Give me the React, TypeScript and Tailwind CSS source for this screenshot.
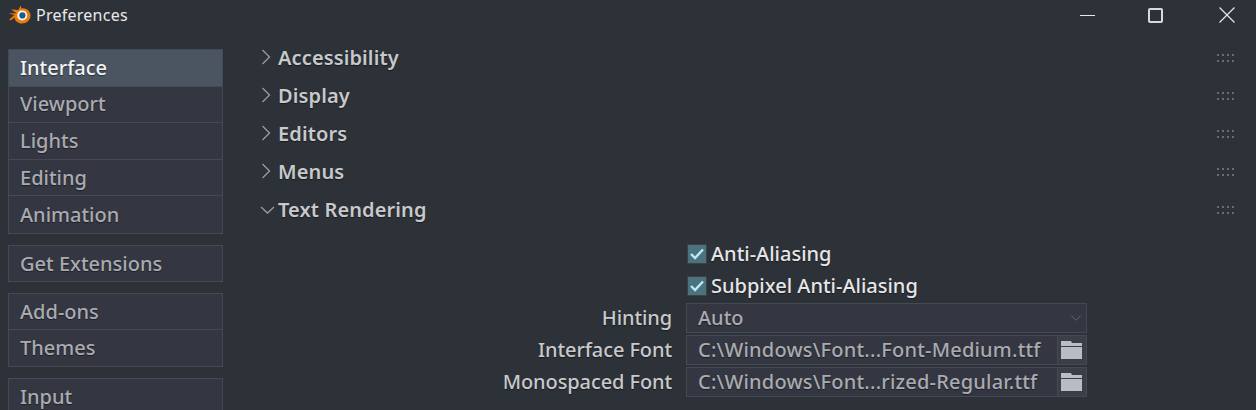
import { ChevronDown } from "lucide-react";

const font = { fontFamily: '"Noto Sans", sans-serif' };

// blender logo, drawn by hand
function Logo() {
  return (
    <svg width="23" height="20" viewBox="0 0 23 20" className="shrink-0">
      <path d="M0.5 8.6 L8.5 8.2 L3 4.6 L10.5 5 L12.5 0.6 L13.5 3.4 C18 2.6 22.5 6 22.5 10.5 C22.5 15 18.5 18.5 14 18.5 C10 18.5 6.8 16 6.6 12.5 L2.5 15.5 L1.2 14.6 L6.5 10 Z" fill="#e87d0d" />
      <circle cx="14.2" cy="10.4" r="5" fill="#f4f6f8" />
      <circle cx="14.4" cy="10.4" r="3.1" fill="#265787" />
    </svg>
  );
}

function NavGroup({ items, active, rowH }: { items: string[]; active?: string; rowH: string }) {
  return (
    <div className="flex flex-col border border-[#454954] bg-[#343741] divide-y divide-[#454954]">
      {items.map((t) => (
        <div
          key={t}
          className={`flex items-center pl-[11px] text-[20px] font-medium [text-shadow:0_1px_1px_rgba(0,0,0,0.45)] ${rowH} ${t === active ? "bg-[#4b5561] text-[#f2f3f4]" : "text-[#a9abb1]"}`}
        >
          {t}
        </div>
      ))}
    </div>
  );
}

function Grip() {
  return (
    <div className="grid grid-cols-4 gap-x-[3px] gap-y-[4px]">
      {Array.from({ length: 8 }).map((_, i) => (
        <span key={i} className="w-[2px] h-[2px] bg-[#6a6e74]" />
      ))}
    </div>
  );
}

function PanelHeader({ title, open }: { title: string; open?: boolean }) {
  return (
    <div className="flex items-center h-[38px]">
      <div className="w-[28px] flex justify-start">
        {open ? (
          <svg width="15" height="8" viewBox="0 0 15 8" fill="none" stroke="#9a9ca1" strokeWidth="1.3" className="ml-[10px]">
            <path d="M1 1 L7.5 7 L14 1" />
          </svg>
        ) : (
          <svg width="10" height="16" viewBox="0 0 10 16" fill="none" stroke="#9a9ca1" strokeWidth="1.3" className="ml-[11px] -mt-[2px]">
            <path d="M1.5 1 L8.5 8 L1.5 15" />
          </svg>
        )}
      </div>
      <span className="text-[20px] font-semibold tracking-[0.12px] text-[#c8c9cb] [text-shadow:0_1px_1px_rgba(0,0,0,0.45)]">{title}</span>
      <div className="ml-auto">
        <Grip />
      </div>
    </div>
  );
}

function CheckRow({ label }: { label: string }) {
  return (
    <div className="flex items-center h-[32px]">
      <div className="w-[20px] h-[20px] bg-[#4c727c] border border-[#3d3f44] flex items-center justify-center">
        <svg width="14" height="12" viewBox="0 0 14 12" fill="none" stroke="#b4ecfb" strokeWidth="2.4">
          <path d="M1 6 L5 10 L13 1.5" />
        </svg>
      </div>
      <span className="ml-[4px] text-[20px] font-medium text-[#e6e6e7] [text-shadow:0_1px_1px_rgba(0,0,0,0.45)]">{label}</span>
    </div>
  );
}

function FolderIcon() {
  return (
    <svg width="22" height="20" viewBox="0 0 22 20">
      <path d="M0 1 L10 1 L11 3 L21 3 L21 6 L0 6 Z" fill="#b8bcc6" />
      <rect x="0" y="7" width="21" height="12" fill="#b8bcc6" />
    </svg>
  );
}

function FileRow({ label, value }: { label: string; value: string }) {
  return (
    <div className="flex items-center h-[32px]">
      <span className="w-[386px] pr-[14px] text-right text-[20px] font-medium tracking-[-0.1px] text-[#c8c9cb] [text-shadow:0_1px_1px_rgba(0,0,0,0.45)]">{label}</span>
      <div className="flex w-[401px] h-[30px] border border-[#454954] bg-[#343741]">
        <div className="flex-1 pl-[11px] flex items-center text-[20px] font-medium tracking-[0.2px] text-[#a9abb1] border-r border-[#454954] [text-shadow:0_1px_1px_rgba(0,0,0,0.45)]">{value}</div>
        <div className="w-[28px] flex items-center justify-center bg-[#3b3e47]">
          <FolderIcon />
        </div>
      </div>
    </div>
  );
}

export default function App() {
  return (
    <div className="w-[1256px] h-[410px] overflow-hidden bg-[#2d3138] flex flex-col" style={font}>
      {/* title bar */}
      <div className="h-[30px] flex items-center pl-[8px] pr-[21px] shrink-0">
        <Logo />
        <span className="ml-[5px] text-[16px] tracking-[0.25px] text-[#e8e9ea]">Preferences</span>
        <div className="ml-auto flex items-center">
          <span className="w-[15px] h-px bg-[#e8e9ea]" />
          <span className="ml-[53px] w-[15px] h-[15px] border-2 border-[#d8d9da] rounded-[2px]" />
          <svg width="16" height="16" viewBox="0 0 16 16" stroke="#e8e9ea" strokeWidth="1.2" className="ml-[56px]">
            <path d="M0.5 0.5 L15.5 15.5 M15.5 0.5 L0.5 15.5" />
          </svg>
        </div>
      </div>

      <div className="flex flex-1 min-h-0">
        {/* sidebar */}
        <div className="w-[215px] ml-[8px] mt-[19px] flex flex-col gap-[11px] shrink-0">
          <NavGroup items={["Interface", "Viewport", "Lights", "Editing", "Animation"]} active="Interface" rowH="h-[36.6px]" />
          <NavGroup items={["Get Extensions"]} rowH="h-[35px] pt-[2px]" />
          <NavGroup items={["Add-ons", "Themes"]} rowH="h-[36px] first:pt-[2px]" />
          <NavGroup items={["Input"]} rowH="h-[36px]" />
        </div>

        {/* panels */}
        <div className="ml-[27px] w-[984px] mt-[9px] flex flex-col">
          <PanelHeader title="Accessibility" />
          <PanelHeader title="Display" />
          <PanelHeader title="Editors" />
          <PanelHeader title="Menus" />
          <PanelHeader title="Text Rendering" open />
          <div className="mt-[9px] flex flex-col">
            <div className="pl-[437px]">
              <CheckRow label="Anti-Aliasing" />
              <CheckRow label="Subpixel Anti-Aliasing" />
            </div>
            <div className="flex items-center h-[32px] pl-[50px]">
              <span className="w-[386px] pr-[14px] text-right text-[20px] font-medium tracking-[-0.1px] text-[#c8c9cb] [text-shadow:0_1px_1px_rgba(0,0,0,0.45)]">Hinting</span>
              <div className="flex items-center justify-between w-[401px] h-[30px] border border-[#454954] bg-[#343741] pl-[11px] pr-[1px] text-[20px] font-medium text-[#a9abb1] [text-shadow:0_1px_1px_rgba(0,0,0,0.45)]">
                Auto
                <ChevronDown size={18} strokeWidth={1.3} className="text-[#62656e]" />
              </div>
            </div>
            <div className="pl-[50px]">
              <FileRow label="Interface Font" value="C:\Windows\Font...Font-Medium.ttf" />
              <FileRow label="Monospaced Font" value="C:\Windows\Font...rized-Regular.ttf" />
            </div>
          </div>
        </div>
      </div>
    </div>
  );
}
